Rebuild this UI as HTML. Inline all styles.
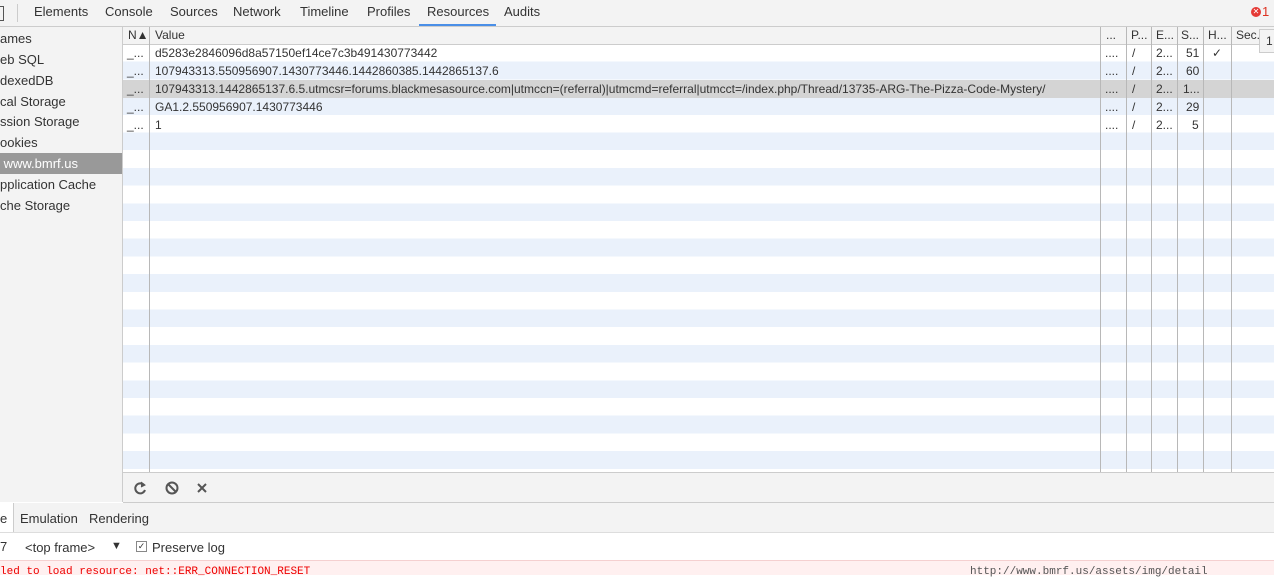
<html><head><style>
body{margin:0;width:1274px;height:574px;overflow:hidden;font-family:"Liberation Sans",sans-serif;font-size:12px;color:#333;background:#fff;position:relative}
.a{position:absolute}
.tabs{top:0;left:0;width:1274px;height:26px;background:#f3f3f3;border-bottom:1px solid #ccc}
.tab{top:4px;font-size:13px;color:#333}
.side{top:27px;left:0;width:122px;height:475px;background:#f3f3f3;border-right:1px solid #ccc}
.si{left:0;height:21px;line-height:21px;font-size:13px;width:122px;white-space:nowrap;overflow:hidden}
.grid{top:27px;left:123px;width:1151px;height:445px;background:repeating-linear-gradient(#fff 0 17.7px,#eaf1fb 17.7px 35.4px);background-position:0 17px}
.hdr{top:27px;left:123px;width:1151px;height:17px;background:#f3f3f3;border-bottom:1px solid #ccc}
.vl{top:27px;height:445px;width:1px;background:#b8b8b8}
.c{height:18px;line-height:18px;font-size:12px;white-space:nowrap}
</style></head><body>
<div class="a tabs"></div>
<div class="a" style="left:0;top:6px;width:3px;height:13px;border:1px solid #555;border-left:none"></div>
<div class="a" style="left:17px;top:4px;width:1px;height:18px;background:#ccc"></div>
<span class="a tab" style="left:34px">Elements</span><span class="a tab" style="left:105px">Console</span><span class="a tab" style="left:170px">Sources</span><span class="a tab" style="left:233px">Network</span><span class="a tab" style="left:300px">Timeline</span><span class="a tab" style="left:367px">Profiles</span><span class="a tab" style="left:427px">Resources</span><span class="a tab" style="left:504px">Audits</span>
<div class="a" style="left:419px;top:24px;width:77px;height:2px;background:#4a8fe7"></div>
<div class="a" style="left:1251px;top:7px;width:10px;height:10px;border-radius:50%;background:#e53935;color:#fff;font-size:8px;line-height:10px;text-align:center">✕</div><span class="a" style="left:1262px;top:4px;font-size:13px;color:#d32">1</span>
<div class="a side"></div>
<div class="a si" style="top:28px">ames</div><div class="a si" style="top:49px">eb SQL</div><div class="a si" style="top:70px">dexedDB</div><div class="a si" style="top:91px">cal Storage</div><div class="a si" style="top:111px">ssion Storage</div><div class="a si" style="top:132px">ookies</div>
<div class="a si" style="top:153px;background:#999;color:#fff">&nbsp;www.bmrf.us</div>
<div class="a si" style="top:174px">pplication Cache</div><div class="a si" style="top:195px">che Storage</div>
<div class="a grid"></div>
<div class="a" style="top:80px;left:123px;width:1151px;height:18px;background:#d4d4d4"></div>
<div class="a hdr"></div>
<div class="a vl" style="left:149px"></div><div class="a vl" style="left:1100px"></div><div class="a vl" style="left:1126px"></div><div class="a vl" style="left:1151px"></div><div class="a vl" style="left:1177px"></div><div class="a vl" style="left:1203px"></div><div class="a vl" style="left:1231px"></div>
<span class="a c" style="top:26px;left:128px">N▲</span><span class="a c" style="top:26px;left:155px">Value</span><span class="a c" style="top:26px;left:1106px">...</span><span class="a c" style="top:26px;left:1131px">P...</span><span class="a c" style="top:26px;left:1156px">E...</span><span class="a c" style="top:26px;left:1181px">S...</span><span class="a c" style="top:26px;left:1208px">H...</span><span class="a c" style="top:26px;left:1236px">Sec...</span>
<div class="a" style="left:1259px;top:29px;width:20px;height:22px;background:#f3f3f3;border:1px solid #ccc;font-size:12px;line-height:22px;padding-left:6px">1</div>
<div class="a" style="top:44px;left:0">
<span class="a c" style="top:0;left:127px">_...</span><span class="a c" style="top:0;left:155px">d5283e2846096d8a57150ef14ce7c3b491430773442</span>
<span class="a c" style="top:18px;left:127px">_...</span><span class="a c" style="top:18px;left:155px">107943313.550956907.1430773446.1442860385.1442865137.6</span>
<span class="a c" style="top:36px;left:127px">_...</span><span class="a c" style="top:36px;left:155px">107943313.1442865137.6.5.utmcsr=forums.blackmesasource.com|utmccn=(referral)|utmcmd=referral|utmcct=/index.php/Thread/13735-ARG-The-Pizza-Code-Mystery/</span>
<span class="a c" style="top:54px;left:127px">_...</span><span class="a c" style="top:54px;left:155px">GA1.2.550956907.1430773446</span>
<span class="a c" style="top:72px;left:127px">_...</span><span class="a c" style="top:72px;left:155px">1</span>
</div>
<div class="a" style="top:44px;left:0">
<span class="a c" style="top:0;left:1105px">....</span><span class="a c" style="top:0;left:1132px">/</span><span class="a c" style="top:0;left:1156px">2...</span><span class="a c" style="top:0;left:1186px">51</span><span class="a c" style="top:0;left:1212px">✓</span>
<span class="a c" style="top:18px;left:1105px">....</span><span class="a c" style="top:18px;left:1132px">/</span><span class="a c" style="top:18px;left:1156px">2...</span><span class="a c" style="top:18px;left:1186px">60</span>
<span class="a c" style="top:36px;left:1105px">....</span><span class="a c" style="top:36px;left:1132px">/</span><span class="a c" style="top:36px;left:1156px">2...</span><span class="a c" style="top:36px;left:1183px">1...</span>
<span class="a c" style="top:54px;left:1105px">....</span><span class="a c" style="top:54px;left:1132px">/</span><span class="a c" style="top:54px;left:1156px">2...</span><span class="a c" style="top:54px;left:1186px">29</span>
<span class="a c" style="top:72px;left:1105px">....</span><span class="a c" style="top:72px;left:1132px">/</span><span class="a c" style="top:72px;left:1156px">2...</span><span class="a c" style="top:72px;left:1192px">5</span>
</div>
<div class="a" style="top:472px;left:123px;width:1151px;height:29px;background:#f3f3f3;border-top:1px solid #ccc;border-bottom:1px solid #ccc"></div>
<svg class="a" style="left:132px;top:480px" width="90" height="16" fill="none" stroke="#555" stroke-width="2"><path d="M12 5A5 5 0 1 0 13 10"/><path d="M9 2l4 3-4 2" fill="#555" stroke-width="1"/><circle cx="40" cy="8" r="5.5"/><path d="M36 4l8 8"/><path d="M66 4l8 8M74 4l-8 8"/></svg>
<div class="a" style="top:503px;left:0;width:1274px;height:29px;background:#f3f3f3;border-bottom:1px solid #ddd"></div>
<div class="a" style="top:503px;left:0;width:13px;height:29px;background:#fff;border-right:1px solid #ccc"></div>
<span class="a" style="top:511px;left:0;font-size:13px">e</span><span class="a" style="top:511px;left:20px;font-size:13px">Emulation</span><span class="a" style="top:511px;left:89px;font-size:13px">Rendering</span>
<span class="a" style="top:539px;left:0;font-size:13px">7</span><span class="a" style="top:540px;left:25px;font-size:13px">&lt;top frame&gt;</span><span class="a" style="top:540px;left:111px;font-size:11px">▼</span>
<div class="a" style="top:541px;left:136px;width:9px;height:9px;border:1px solid #888;font-size:9px;line-height:9px;text-align:center">✓</div><span class="a" style="top:540px;left:152px;font-size:13px">Preserve log</span>
<div class="a" style="top:560px;left:0;width:1274px;height:14px;background:#fff0f0;border-top:1px solid #f5d0d0"></div>
<span class="a" style="top:566px;left:0;font-family:'Liberation Mono',monospace;font-size:11px;color:#e00">led to load resource: net::ERR_CONNECTION_RESET</span>
<span class="a" style="top:566px;left:970px;font-family:'Liberation Mono',monospace;font-size:11px;color:#555">http://www.bmrf.us/assets/img/detail</span>
</body></html>
